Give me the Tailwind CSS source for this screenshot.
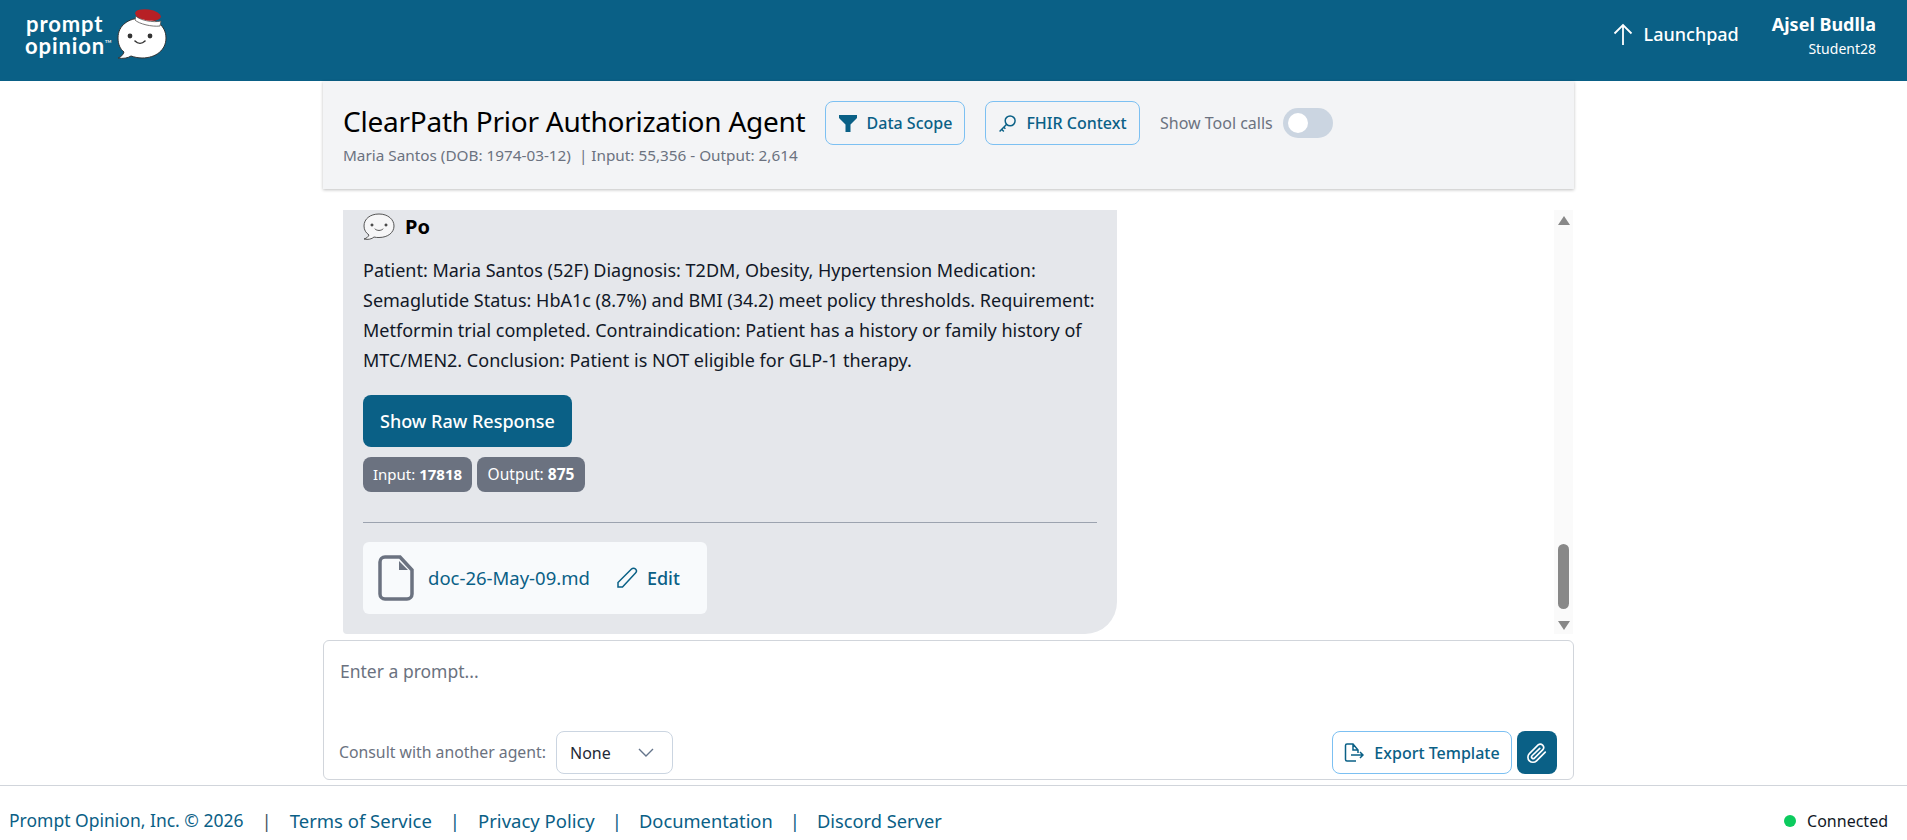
<!DOCTYPE html>
<html lang="en">
<head>
<meta charset="UTF-8">
<title>ClearPath Prior Authorization Agent</title>
<script src="https://cdn.jsdelivr.net/npm/@tailwindcss/browser@4"></script>
</head>
<body class="h-screen overflow-hidden bg-white flex flex-col font-['Noto_Sans',sans-serif]">
    <!-- Top bar -->
    <header class="h-[81px] shrink-0 bg-[#0a6086] flex items-center justify-between text-white">
        <div class="flex items-start pl-[25px] h-[81px] pt-[8px]">
            <div class="font-['Lato',sans-serif] font-bold text-[22px] tracking-[0.9px] leading-[22px] w-[91px] pt-[5px]">
                <div class="ml-[1px]">prompt</div>
                <div class="flex items-start">opinion<span class="text-[4px] leading-[6px] mt-[4px] tracking-normal">TM</span></div>
            </div>
            <svg width="52" height="52" viewBox="0 0 52 52">
                <path d="M26 10C13 10 2 17 2 30c0 6 2 11 6 14-1 3-3 5-6 6 5 1 10 0 13-2 3 1 7 2 11 2 14 0 24-8 24-20S40 10 26 10z" fill="#fff" stroke="#333" stroke-width="1"/>
                <path d="M20 8c3 4 17 7 25 5l-1 5c-8 1-21-2-25-6z" fill="#fff" stroke="#555" stroke-width=".8"/>
                <ellipse cx="32" cy="7" rx="13" ry="5.500" transform="rotate(8 32 7)" fill="#b72025"/>
                <circle cx="14" cy="28" r="2.400" fill="#333"/>
                <circle cx="34" cy="28" r="2.400" fill="#333"/>
                <path d="M19 33c3 3 7 3 10 0" fill="none" stroke="#333" stroke-width="1.600" stroke-linecap="round"/>
            </svg>
        </div>
        <div class="flex items-center pr-[31px]">
            <div class="flex items-center pb-[13px]">
                <svg width="20" height="22" viewBox="0 0 20 22" fill="none" stroke="#fff" stroke-width="1.800" class="mr-[11px]">
                    <path d="M10 22V2M1.500 10.500 10 2l8.500 8.500"/>
                </svg>
                <span class="text-[18px] font-medium mr-[33px]">Launchpad</span>
            </div>
            <div class="text-right -mt-[10px]">
                <div class="text-[18px] leading-[22px] font-bold">Ajsel Budlla</div>
                <div class="text-[14px] leading-[20px] mt-[4px]">Student28</div>
            </div>
        </div>
    </header>

    <main class="flex-1 min-h-0 ml-[323px] w-[1251px] flex flex-col">
        <!-- Agent title -->
        <section class="h-[108px] shrink-0 bg-[#f3f4f6] shadow-[0_1px_3px_rgba(0,0,0,0.25)] pl-[20px] pt-[20px] z-10">
            <div class="flex items-center">
                <h1 class="text-[28px] leading-[44px] -mt-[4px] text-black tracking-[-0.25px] w-[482px] whitespace-nowrap">ClearPath Prior Authorization Agent</h1>
                <button class="h-[44px] w-[140px] rounded-lg border border-[#7cc0f2] flex items-center justify-center gap-[9px] text-[#0a6086] text-[16px] font-medium">
                    <svg width="20" height="20" viewBox="0 0 20 20" fill="#0a6086"><path d="M1 2h18v3l-6.500 6.500V19H7.500v-7.500L1 5z"/></svg>
                    Data Scope
                </button>
                <button class="ml-[20px] h-[44px] w-[155px] rounded-lg border border-[#7cc0f2] flex items-center justify-center gap-[9px] text-[#0a6086] text-[16px] font-medium">
                    <svg width="19" height="19" viewBox="0 0 18 18" fill="none" stroke="#0a6086" stroke-width="1.400"><circle cx="11.500" cy="6.500" r="4.700"/><path d="M8 10 1.500 16.500M3.500 14.500l2 2M5.500 12.500l1.500 1.500"/></svg>
                    FHIR Context
                </button>
                <span class="ml-[20px] text-[16px] text-[#6b7280]">Show Tool calls</span>
                <div class="ml-[10px] w-[50px] h-[30px] rounded-full bg-[#cbd5e1] flex items-center pl-[5px]">
                    <div class="w-[20px] h-[20px] rounded-full bg-white"></div>
                </div>
            </div>
            <p class="text-[15.300px] leading-[20px] text-[#6b7280]">Maria Santos (DOB: 1974-03-12) &nbsp;| Input: 55,356 - Output: 2,614</p>
        </section>

        <!-- Conversation -->
        <section class="mt-[21px] h-[424px] shrink-0 flex overflow-hidden">
            <div class="flex-1 pl-[20px] min-w-0">
                <article class="w-[774px] h-[424px] bg-[#e5e7eb] rounded-bl-[4px] rounded-br-[32px] px-[20px] pt-[5px]">
                    <div class="flex items-center gap-[10px] h-[24px]">
                        <svg width="32" height="28" viewBox="0 0 32 28" fill="none" stroke="#444" stroke-width=".9"><path d="M16 1C7 1 1 6 1 13c0 4 2 7 5 9-1 2-2 3-5 4 4 1 8 0 10-2 2 .5 3 .5 5 .5 9 0 15-5 15-11.500S25 1 16 1z" fill="#f6f6f7"/><circle cx="9" cy="12" r="1.100" fill="#333"/><circle cx="23" cy="12" r="1.100" fill="#333"/><path d="M12 16c2 2 6 2 8 0" stroke-linecap="round"/></svg>
                        <span class="text-[20px] font-bold text-black">Po</span>
                    </div>
                    <p class="mt-[16px] text-[18px] leading-[30px] text-[#111827] w-[734px]">Patient: Maria Santos (52F) Diagnosis: T2DM, Obesity, Hypertension Medication: Semaglutide Status: HbA1c (8.7%) and BMI (34.2) meet policy thresholds. Requirement: Metformin trial completed. Contraindication: Patient has a history or family history of MTC/MEN2. Conclusion: Patient is NOT eligible for GLP-1 therapy.</p>
                    <button class="mt-[20px] block w-[209px] h-[52px] rounded-lg bg-[#0a6086] text-white text-[18px] font-medium">Show Raw Response</button>
                    <div class="mt-[10px] flex gap-[5px]">
                        <span class="h-[35px] w-[109px] justify-center rounded-lg bg-[#6b7280] text-white text-[15px] flex items-center">Input:&nbsp;<b>17818</b></span>
                        <span class="h-[35px] w-[108px] justify-center rounded-lg bg-[#6b7280] text-white text-[15.500px] flex items-center">Output:&nbsp;<b>875</b></span>
                    </div>
                    <hr class="mt-[30px] border-[#9ca3af]">
                    <div class="mt-[19px] w-[344px] h-[72px] rounded-md bg-[#f8fafc] flex items-center pl-[15px]">
                        <svg width="36" height="46" viewBox="0 0 36 46" fill="none" stroke="#6b7280" stroke-width="3.500"><path d="M7 2h15l12 13v24a5 5 0 0 1-5 5H7a5 5 0 0 1-5-5V7a5 5 0 0 1 5-5z"/><path d="M21 6v9h9z" fill="#6b7280" stroke="none"/></svg>
                        <span class="ml-[14px] text-[18.500px] text-[#0a6086]">doc-26-May-09.md</span>
                        <svg width="22" height="22" viewBox="0 0 22 22" fill="none" stroke="#0a6086" stroke-width="1.500" class="ml-[26px]"><path d="M2 20v-4.500L15.500 2a2.500 2.500 0 0 1 4 4L6.500 20z"/></svg>
                        <span class="ml-[9px] text-[18px] font-medium text-[#0a6086]">Edit</span>
                    </div>
                </article>
            </div>
            <!-- Scrollbar -->
            <div class="w-[19px] mr-[1px] bg-[#fafafa] flex flex-col items-center pt-[6px] pb-[4px]">
                <div class="w-0 h-0 border-x-[6.500px] border-x-transparent border-b-[9px] border-b-[#888]"></div>
                <div class="mt-auto w-[11px] h-[65px] rounded-full bg-[#888]"></div>
                <div class="mt-[12px] w-0 h-0 border-x-[6.500px] border-x-transparent border-t-[9px] border-t-[#888]"></div>
            </div>
        </section>

        <!-- Prompt box -->
        <section class="mt-[6px] h-[140px] shrink-0 border border-[#d1d5db] rounded-md px-[16px] flex flex-col">
            <div class="pt-[18px] text-[17.500px] leading-[24px] text-[#6b7280]">Enter a prompt...</div>
            <div class="mt-auto pb-[5px] flex items-center">
                <span class="text-[15.800px] text-[#6b7280] -ml-[1px]">Consult with another agent:</span>
                <div class="ml-[10px] w-[117px] h-[43px] rounded-lg border border-[#cbd5e1] flex items-center justify-between pl-[13px] pr-[18px] text-[16px] text-[#1f2937]">
                    None
                    <svg width="16" height="10" viewBox="0 0 16 10" fill="none" stroke="#64748b" stroke-width="1.400"><path d="m1 1 7 7 7-7"/></svg>
                </div>
                <button class="ml-auto w-[180px] h-[43px] rounded-lg border border-[#7cc0f2] flex items-center justify-center gap-[10px] text-[#0a6086] text-[16px] font-medium">
                    <svg width="20" height="20" viewBox="0 0 20 20" fill="none" stroke="#0a6086" stroke-width="1.500"><path d="M12 18H3a1.500 1.500 0 0 1-1.500-1.500v-14A1.500 1.500 0 0 1 3 1h6l5 6v3M9 1v6h5M7 12h12M16 9l3 3-3 3"/></svg>
                    Export Template
                </button>
                <button class="ml-[5px] w-[40px] h-[43px] rounded-lg bg-[#0a6086] flex items-center justify-center">
                    <svg width="22" height="22" viewBox="0 0 24 24" fill="none" stroke="#fff" stroke-width="1.800" stroke-linecap="round"><path d="m21 11-9.500 9.500a5.500 5.500 0 0 1-7.800-7.800l9.500-9.500a3.700 3.700 0 0 1 5.200 5.200l-9.200 9.200a1.800 1.800 0 0 1-2.600-2.600L15 7"/></svg>
                </button>
            </div>
        </section>
    </main>

    <!-- Footer -->
    <footer class="h-[55px] shrink-0 border-t border-[#d1d5db] pl-[9px] pr-[19px] pt-[15px] flex items-center justify-between text-[#0a6086] text-[18.500px]">
        <div class="flex items-center">
            <span class="text-[17.500px]">Prompt Opinion, Inc. © 2026</span>
            <span class="mx-[18px] text-[#4b5563]">|</span>
            <span>Terms of Service</span>
            <span class="mx-[18px]">|</span>
            <span>Privacy Policy</span>
            <span class="mx-[17px]">|</span>
            <span class="text-[18.300px]">Documentation</span>
            <span class="mx-[17px]">|</span>
            <span class="text-[18.300px]">Discord Server</span>
        </div>
        <div class="flex items-center text-[16px] text-[#111827]">
            <span class="w-[12px] h-[12px] rounded-full bg-[#0ccb5e] mr-[11px]"></span>
            Connected
        </div>
    </footer>
</body>
</html>
